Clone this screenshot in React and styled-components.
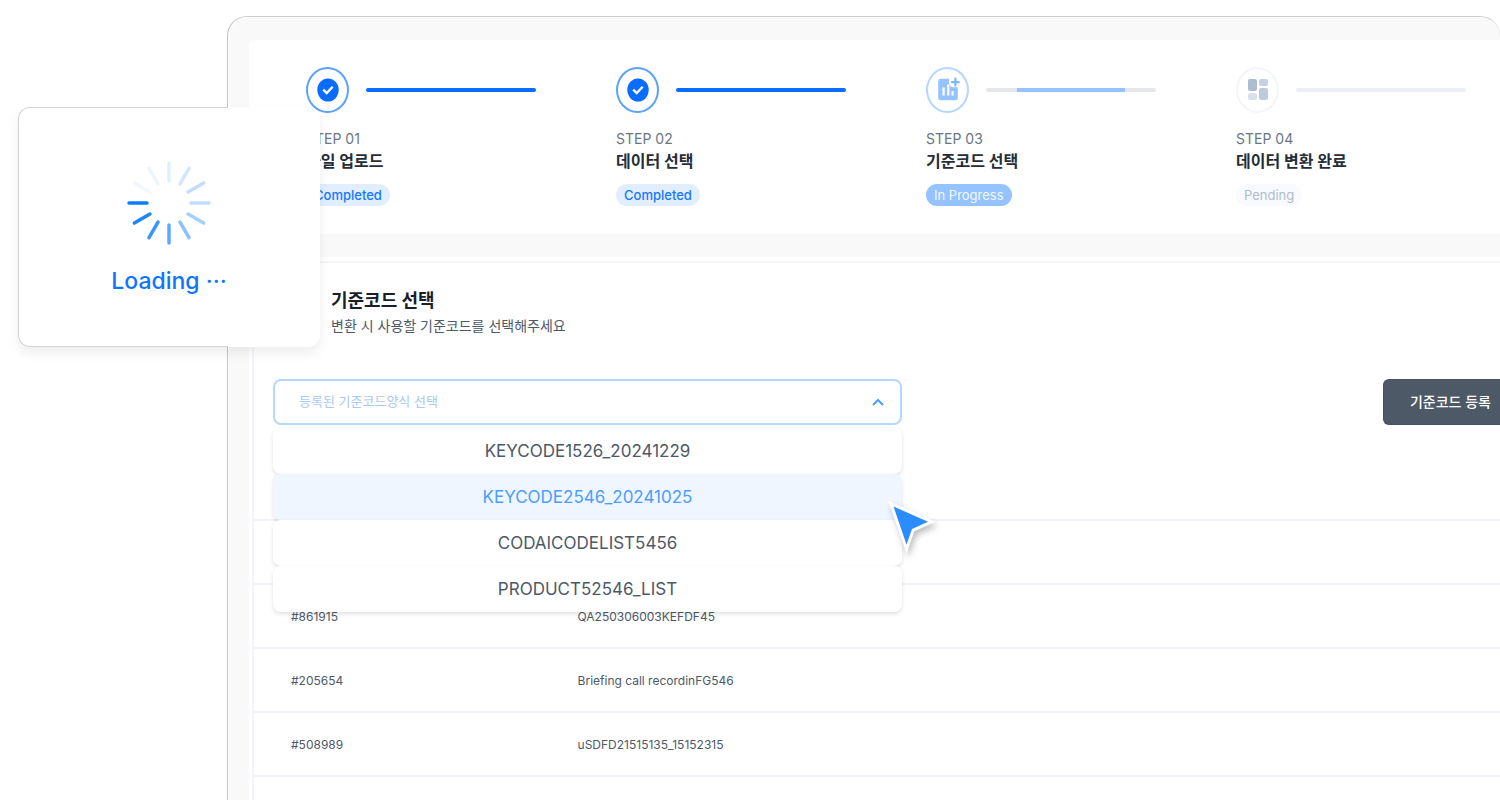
import React from "react";
import styled, { createGlobalStyle } from "styled-components";

const GlobalStyle = createGlobalStyle`
  *, *::before, *::after { box-sizing: border-box; }
  html, body { margin: 0; background: #ffffff; }
  body, button, select {
    font-family: Inter, "Noto Sans CJK KR", sans-serif;
  }
`;

const Page = styled.div`
  position: relative;
  height: 100vh;
  padding: 16px 0 0 227px;
  overflow: hidden;
`;

const Frame = styled.main`
  display: flex;
  flex-direction: column;
  gap: 23px;
  min-height: calc(100vh - 6px);
  padding: 23px 0 0 21px;
  border-top: 1px solid #cccccc;
  border-left: 1px solid #c4c4c4;
  border-radius: 20px 20px 0 20px;
  background: #f9f9f9;
  box-shadow: inset 1px 1px 0 #ffffff;
`;

const Steps = styled.ol`
  display: grid;
  grid-template-columns: repeat(4, 1fr);
  gap: 80px;
  margin: 0;
  padding: 27px 34px 28px 57px;
  border-radius: 6px 0 0 0;
  background: #ffffff;
  list-style: none;
`;

const Step = styled.li`
  display: flex;
  flex-direction: column;
  align-items: flex-start;
  min-width: 0;
`;

const StepTrack = styled.div`
  display: flex;
  align-items: center;
  gap: 17px;
  width: 100%;
  margin-bottom: 15px;
`;

const StepCircle = styled.span`
  display: flex;
  flex: none;
  align-items: center;
  justify-content: center;
  width: 43px;
  height: 46px;
  border: 2px solid ${(p) => p.$color};
  border-radius: 50%;
`;

const Track = styled.span`
  display: flex;
  flex: 1;
  justify-content: center;
  height: 4px;
  border-radius: 2px;
  background: ${(p) => p.$color};
`;

const TrackFill = styled.span`
  width: 64%;
  background: #94c3ff;
`;

const StepNumber = styled.span`
  font-size: 14px;
  line-height: 22px;
  color: #6b7684;
`;

const StepTitle = styled.strong`
  font-size: 16px;
  font-weight: 700;
  line-height: 22px;
  color: #252d37;
  white-space: nowrap;
`;

const Pill = styled.span`
  margin-top: 12px;
  padding: 0 8px;
  border-radius: 11px;
  background: ${(p) => p.$bg};
  color: ${(p) => p.$color};
  font-size: 13px;
  font-weight: ${(p) => p.$weight};
  line-height: 22px;
`;

const Panel = styled.section`
  flex: 1;
  padding: 4px 0 0 3px;
  background: #ffffff;
`;

const PanelBody = styled.div`
  height: 100%;
  min-height: 560px;
  border-top: 2px solid #f3f5fb;
  border-left: 2px solid #f3f5fb;
`;

const PanelHeader = styled.header`
  padding: 25px 0 0 77px;
`;

const PanelTitle = styled.h1`
  margin: 0;
  font-size: 18px;
  font-weight: 700;
  line-height: 26px;
  color: #191f28;
`;

const PanelText = styled.p`
  margin: 0;
  font-size: 14px;
  line-height: 24px;
  color: #4e5968;
`;

const Toolbar = styled.div`
  display: flex;
  align-items: flex-start;
  justify-content: space-between;
  padding: 41px 0 94px 19px;
`;

const Dropdown = styled.div`
  position: relative;
  width: 60%;
  max-width: 629px;
`;

const SelectBox = styled.select`
  display: block;
  width: 100%;
  height: 46px;
  padding: 0 48px 2px 24px;
  border: 2px solid #b5d8ff;
  border-radius: 8px;
  background: #ffffff;
  color: #a9c9f0;
  font-size: 13px;
  appearance: none;
`;

const Chevron = styled.svg`
  position: absolute;
  top: 19px;
  right: 18px;
  pointer-events: none;
`;

const Menu = styled.ul`
  position: absolute;
  z-index: 2;
  top: 49px;
  left: 0;
  right: 0;
  margin: 0;
  padding: 0;
  list-style: none;
`;

const MenuItem = styled.li`
  height: 46px;
  border-radius: 8px;
  background: ${(p) => (p.$active ? "#eff6ff" : "#ffffff")};
  box-shadow: 0 2px 4px rgba(0, 0, 0, 0.12);
`;

const MenuButton = styled.button`
  width: 100%;
  height: 100%;
  padding: 0;
  border: 0;
  background: none;
  color: ${(p) => (p.$active ? "#4b9eff" : "#4e5968")};
  font-size: 17px;
  cursor: pointer;
`;

const RegisterButton = styled.button`
  height: 46px;
  padding: 0 9px 3px 26px;
  border: 1px solid #47525f;
  border-right: 0;
  border-radius: 6px 0 0 6px;
  background: #4e5968;
  color: #ffffff;
  font-size: 14px;
  font-weight: 500;
  white-space: nowrap;
`;

const Table = styled.table`
  width: 100%;
  border-top: 2px solid #f2f1fd;
  border-spacing: 0;
  table-layout: fixed;
`;

const Cell = styled.td`
  width: ${(p) => (p.$first ? "23%" : "auto")};
  height: 64px;
  padding: 0 0 0 37px;
  border-bottom: 2px solid #f2f1fd;
  color: #4e5968;
  font-size: 12px;
`;

const LoadingCard = styled.div`
  position: absolute;
  z-index: 3;
  top: 107px;
  left: 18px;
  display: flex;
  flex-direction: column;
  align-items: center;
  gap: 18px;
  width: 302px;
  height: 240px;
  padding-top: 53px;
  border-radius: 12px;
  background: #ffffff;
  box-shadow: 0 6px 12px rgba(0, 0, 0, 0.07);

  &::before {
    content: "";
    position: absolute;
    inset: 0 92px 0 0;
    border: 1px solid #d4d4d7;
    border-right: 0;
    border-radius: 12px 0 0 12px;
  }
`;

const LoadingText = styled.span`
  color: #0f75ff;
  font-size: 23px;
  font-weight: 500;
  line-height: 34px;
`;

const Pointer = styled.svg`
  position: absolute;
  z-index: 4;
  top: 126px;
  right: -32px;
  overflow: visible;
  filter: drop-shadow(2px 4px 3px rgba(0, 0, 0, 0.25));
`;

const CheckIcon = () => (
  <svg width="22" height="24" viewBox="0 0 22 24" aria-hidden="true">
    <ellipse cx="11" cy="12" rx="10.7" ry="11.5" fill="#0a6cff" />
    <path d="M6.2 11.600l3.500 3.500 6-6.400" fill="none" stroke="#fff" strokeWidth="2.300" />
  </svg>
);

const ReportIcon = () => (
  <svg width="24" height="26" viewBox="0 0 24 26" aria-hidden="true">
    <path
      d="M4.500 1.800H13v3.400c0 3 2 5 5 5h3.800V21a2.300 2.300 0 0 1-2.300 2.300h-15A2.300 2.300 0 0 1 2.200 21V4.100a2.300 2.300 0 0 1 2.300-2.300z"
      fill="#94c3ff"
    />
    <path d="M7.600 10.500v8M12.300 7.500v11M16.600 14.200v4.300" stroke="#fff" strokeWidth="2.200" />
    <path d="M19.400 .800v8.600M15.200 5.100h8.400" stroke="#7db5ff" strokeWidth="2.200" />
  </svg>
);

const DashboardIcon = () => (
  <svg width="22" height="24" viewBox="0 0 22 24" aria-hidden="true">
    <rect x="1" y="1" width="9" height="12" rx="2" fill="#adbdcf" />
    <rect x="12" y="1" width="9" height="7" rx="2" fill="#c3d1e0" />
    <rect x="1" y="15" width="9" height="7" rx="2" fill="#d9e2ec" />
    <rect x="12" y="10" width="9" height="12" rx="2" fill="#bccbdc" />
  </svg>
);

const SPOKES = [0.12, 0.18, 0.25, 0.25, 0.36, 0.48, 0.66, 0.8, 0.92, 1, 0.05, 0.07];

const Spinner = () => (
  <svg width="86" height="86" viewBox="-43 -43 86 86" role="img" aria-label="Loading">
    {SPOKES.map((opacity, i) => (
      <line
        key={i}
        y1="-22"
        y2="-40"
        stroke="#0a7cff"
        strokeWidth="3.500"
        strokeLinecap="round"
        opacity={opacity}
        transform={`rotate(${i * 30})`}
      />
    ))}
  </svg>
);

const done = {
  icon: <CheckIcon />,
  ring: "#5ba2ff",
  track: "#0a6cff",
  status: "Completed",
  bg: "#e0eeff",
  color: "#1677ff",
  weight: 500,
};

const steps = [
  { ...done, number: "STEP 01", title: "파일 업로드" },
  { ...done, number: "STEP 02", title: "데이터 선택" },
  {
    number: "STEP 03",
    title: "기준코드 선택",
    icon: <ReportIcon />,
    ring: "#b5d6ff",
    track: "#e5e8eb",
    partial: true,
    status: "In Progress",
    bg: "#94c3ff",
    color: "#f2f8ff",
    weight: 400,
  },
  {
    number: "STEP 04",
    title: "데이터 변환 완료",
    icon: <DashboardIcon />,
    ring: "#f3f5fa",
    track: "#ebeff5",
    status: "Pending",
    bg: "#f8faff",
    color: "#b0bccb",
    weight: 400,
  },
];

const options = [
  "KEYCODE1526_20241229",
  "KEYCODE2546_20241025",
  "CODAICODELIST5456",
  "PRODUCT52546_LIST",
];

const rows = [
  ["", ""],
  ["#861915", "QA250306003KEFDF45"],
  ["#205654", "Briefing call recordinFG546"],
  ["#508989", "uSDFD21515135_15152315"],
];

export default function App() {
  return (
    <Page>
      <GlobalStyle />
      <Frame>
        <Steps>
          {steps.map((s) => (
            <Step key={s.number}>
              <StepTrack>
                <StepCircle $color={s.ring}>{s.icon}</StepCircle>
                <Track $color={s.track}>{s.partial && <TrackFill />}</Track>
              </StepTrack>
              <StepNumber>{s.number}</StepNumber>
              <StepTitle>{s.title}</StepTitle>
              <Pill $bg={s.bg} $color={s.color} $weight={s.weight}>
                {s.status}
              </Pill>
            </Step>
          ))}
        </Steps>
        <Panel>
          <PanelBody>
            <PanelHeader>
              <PanelTitle>기준코드 선택</PanelTitle>
              <PanelText>변환 시 사용할 기준코드를 선택해주세요</PanelText>
            </PanelHeader>
            <Toolbar>
              <Dropdown>
                <SelectBox aria-label="기준코드양식" defaultValue="">
                  <option value="">등록된 기준코드양식 선택</option>
                  {options.map((o) => (
                    <option key={o}>{o}</option>
                  ))}
                </SelectBox>
                <Chevron width="12" height="8" viewBox="0 0 12 8" aria-hidden="true">
                  <path d="M1 7l5-5 5 5" fill="none" stroke="#4b9eff" strokeWidth="2" />
                </Chevron>
                <Menu>
                  {options.map((o, i) => (
                    <MenuItem key={o} $active={i === 1}>
                      <MenuButton type="button" $active={i === 1}>
                        {o}
                      </MenuButton>
                    </MenuItem>
                  ))}
                </Menu>
                <Pointer width="42" height="46" viewBox="0 0 42 46" aria-hidden="true">
                  <path
                    d="M1.500 1.500L36 16.700 20 24 14.500 39.500z"
                    fill="#2a8cff"
                    stroke="#fff"
                    strokeWidth="6"
                    paintOrder="stroke"
                  />
                </Pointer>
              </Dropdown>
              <RegisterButton type="button">기준코드 등록</RegisterButton>
            </Toolbar>
            <Table>
              <tbody>
                {rows.map(([id, name], i) => (
                  <tr key={i}>
                    <Cell $first>{id}</Cell>
                    <Cell>{name}</Cell>
                  </tr>
                ))}
              </tbody>
            </Table>
          </PanelBody>
        </Panel>
      </Frame>
      <LoadingCard>
        <Spinner />
        <LoadingText>Loading ···</LoadingText>
      </LoadingCard>
    </Page>
  );
}
